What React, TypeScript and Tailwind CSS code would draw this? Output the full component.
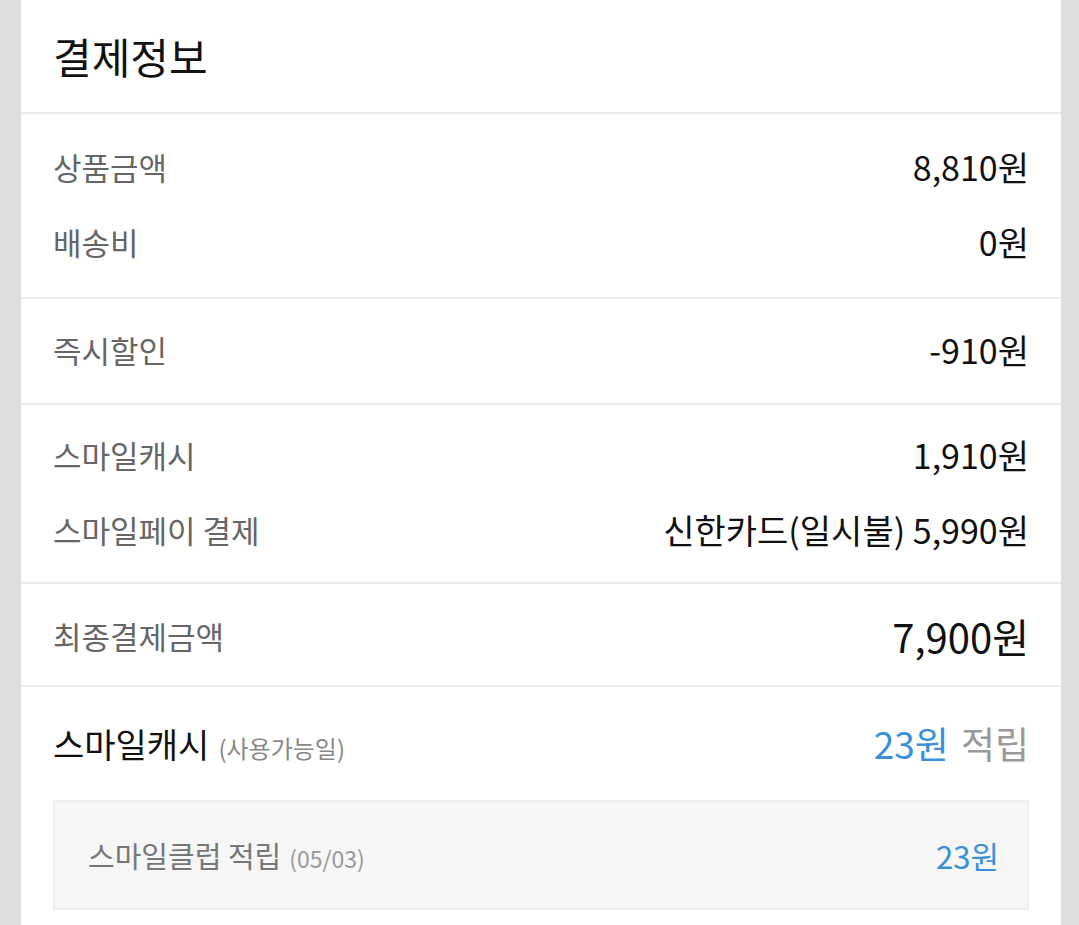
import React from "react";

const font = { fontFamily: '"Noto Sans CJK KR", "Noto Sans", sans-serif' };

function Row({ label, value, big }: { label: string; value: string; big?: boolean }) {
  return (
    <div className="flex h-[75px] items-center justify-between">
      <span className="text-[31px] leading-none text-[#666666]">{label}</span>
      <span className={(big ? "text-[40px]" : "text-[34px]") + " leading-none text-[#111111]"}>{value}</span>
    </div>
  );
}

export default function App() {
  return (
    <div className="flex min-h-[925px] w-full bg-[#dedede] px-[21px] pr-[18px]" style={font}>
      <div className="flex w-full flex-col bg-white">
        <div className="flex h-[112px] items-center px-[32px]">
          <h1 className="text-[42px] font-normal leading-none text-[#111111]">결제정보</h1>
        </div>
        <div className="h-[2px] bg-[#ebebeb]" />
        <div className="px-[32px] pb-[18px] pt-[15px]">
          <Row label="상품금액" value="8,810원" />
          <Row label="배송비" value="0원" />
        </div>
        <div className="h-[2px] bg-[#ebebeb]" />
        <div className="px-[32px] pb-[16px] pt-[13px]">
          <Row label="즉시할인" value="-910원" />
        </div>
        <div className="h-[2px] bg-[#ebebeb]" />
        <div className="px-[32px] pb-[15px] pt-[12px]">
          <Row label="스마일캐시" value="1,910원" />
          <Row label="스마일페이 결제" value="신한카드(일시불) 5,990원" />
        </div>
        <div className="h-[2px] bg-[#ebebeb]" />
        <div className="px-[32px] pb-[12px] pt-[14px]">
          <Row label="최종결제금액" value="7,900원" big />
        </div>
        <div className="h-[2px] bg-[#ebebeb]" />
        <div className="px-[32px] pt-[19px]">
          <div className="flex h-[75px] items-center justify-between">
            <div className="flex items-baseline">
              <span className="text-[34px] leading-none text-[#111111]">스마일캐시</span>
              <span className="ml-[9px] text-[24px] leading-none text-[#888888]">(사용가능일)</span>
            </div>
            <div className="flex items-baseline">
              <span className="text-[37px] leading-none text-[#3a8fd6]">23원</span>
              <span className="ml-[12px] text-[37px] leading-none text-[#999999]">적립</span>
            </div>
          </div>
          <div className="mt-[19px] flex h-[110px] items-center justify-between border-2 border-[#efefef] bg-[#f6f6f6] pl-[33px] pr-[28px]">
            <div className="flex items-baseline">
              <span className="text-[29px] leading-none text-[#777777]">스마일클럽 적립</span>
              <span className="ml-[8px] text-[23px] leading-none text-[#999999]">(05/03)</span>
            </div>
            <span className="text-[31px] leading-none text-[#3a8fd6]">23원</span>
          </div>
        </div>
      </div>
    </div>
  );
}
